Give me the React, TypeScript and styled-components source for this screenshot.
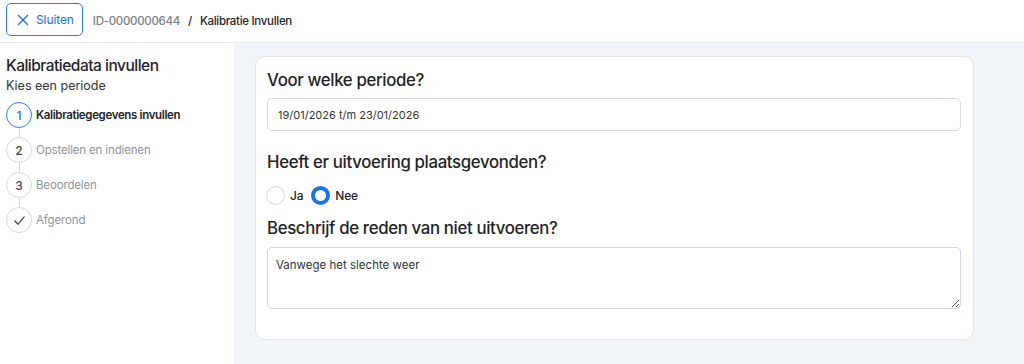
import React from 'react'
import styled, { createGlobalStyle } from 'styled-components'

const GlobalStyle = createGlobalStyle`
body {
    margin: 0;
    font-family: Inter, "Noto Sans", sans-serif;
    color: #1f2328;
    background: #ffffff;
}
* {
    box-sizing: border-box;
}
`

const Page = styled.div`
width : 1024px;
height : 364px;
display : flex;
flex-direction : column;
overflow : hidden;
`
const TopBar = styled.div`
height : 43px;
display : flex;
align-items : center;
padding : 0 6px;
border-bottom : 1px solid #e4e7ec;
gap : 8px;
`
const CloseBtn = styled.button`
height : 33px;
display : flex;
align-items : center;
gap : 7px;
padding : 0 8px 0 10px;
border : 1px solid #2f7de1;
border-radius : 5px;
background : #fff;
color : #1f6fd6;
font-family : inherit;
font-size : 12px;
letter-spacing : -0.1px;
margin-top : -3px;
margin-right : 2px;
`
const Crumb = styled.span<{ dim?: boolean }>`
font-size : 11.5px;
font-weight : 500;
letter-spacing : -0.3px;
color : ${p => p.dim ? '#7b8089' : '#1f2328'};
`
const Body = styled.div`
flex : 1;
display : flex;
`
const Sidebar = styled.div`
width : 234px;
padding : 13px 6px;
background : #fff;
`
const SideTitle = styled.div`
font-size : 15.5px;
font-weight : 500;
line-height : 20px;
letter-spacing : -0.5px;
`
const SideSub = styled.div`
font-size : 12.5px;
color : #333;
margin-top : 2px;
margin-bottom : 9px;
`
const StepList = styled.div`
display : flex;
flex-direction : column;
`
const StepRow = styled.div`
display : flex;
align-items : center;
gap : 4px;
`
const Connector = styled.div`
width : 1px;
height : 9px;
margin-left : 13px;
background : #d4d7dc;
`
const StepDot = styled.div<{ active?: boolean }>`
width : 26px;
height : 26px;
border-radius : 50%;
border : ${p => p.active ? '1.5px solid #2f7de1' : '1px solid #d4d7dc'};
display : flex;
align-items : center;
justify-content : center;
font-size : 12px;
font-weight : 500;
color : ${p => p.active ? '#1f6fd6' : '#444'};
background : #fff;
`
const StepLabel = styled.span<{ active?: boolean }>`
font-size : 11.5px;
font-weight : ${p => p.active ? 600 : 400};
color : ${p => p.active ? '#1f2328' : '#8f949b'};
letter-spacing : ${p => p.active ? '-0.35px' : '-0.15px'};
`
const Main = styled.div`
flex : 1;
background : #f1f4f8;
padding : 13px 50px 0 21px;
`
const Card = styled.div`
background : #fff;
border : 1px solid #e1e4e9;
border-radius : 10px;
padding : 11px 12px 30px 11px;
`
const Question = styled.div`
font-size : 16.8px;
font-weight : 500;
letter-spacing : -0.35px;
line-height : 24px;
margin-bottom : 6px;
`
const TextBox = styled.div`
height : 33px;
border : 1px solid #d5d9e0;
border-radius : 5px;
display : flex;
align-items : center;
padding : 0 10px;
font-size : 11px;
color : #333;
margin-bottom : 19px;
`
const Radios = styled.div`
display : flex;
align-items : center;
gap : 5px;
margin : 12px 0 11px -1px;
`
const Radio = styled.div<{ checked?: boolean }>`
width : 19px;
height : 19px;
border-radius : 50%;
border : ${p => p.checked ? '4.5px solid #1a73e8' : '1px solid #d4d7dc'};
background : #fff;
`
const RadioLabel = styled.span`
font-size : 12px;
font-weight : 500;
letter-spacing : -0.2px;
margin-right : 3px;
`
const Area = styled.textarea`
display : block;
width : 100%;
height : 62px;
margin-top : 7px;
border : 1.5px solid #c9d8ee;
border-radius : 5px;
padding : 10px 8px;
font-family : inherit;
font-size : 11.5px;
color : #333;
resize : vertical;
outline : none;
`

const steps = [
    { n: '1', label: 'Kalibratiegegevens invullen', active: true },
    { n: '2', label: 'Opstellen en indienen' },
    { n: '3', label: 'Beoordelen' },
    { n: 'check', label: 'Afgerond' },
]

function App() {
    return (
        <Page>
            <GlobalStyle />
            <TopBar>
                <CloseBtn>
                    <svg width="12" height="12" viewBox="0 0 12 12" fill="none" stroke="#1f6fd6" strokeWidth="1.4" strokeLinecap="round">
                        <path d="M1.5 1.5 L10.5 10.5 M10.5 1.5 L1.5 10.5" />
                    </svg>
                    Sluiten
                </CloseBtn>
                <Crumb dim>ID-0000000644</Crumb>
                <Crumb>/</Crumb>
                <Crumb>Kalibratie Invullen</Crumb>
            </TopBar>
            <Body>
                <Sidebar>
                    <SideTitle>Kalibratiedata invullen</SideTitle>
                    <SideSub>Kies een periode</SideSub>
                    <StepList>
                        {steps.map((s, i) => (
                            <React.Fragment key={s.label}>
                                {i > 0 && <Connector />}
                                <StepRow>
                                    <StepDot active={s.active}>
                                        {s.n === 'check' ? (
                                            <svg width="13" height="13" viewBox="0 0 14 14" fill="none" stroke="#444" strokeWidth="1.3" strokeLinecap="round" strokeLinejoin="round">
                                                <path d="M2 7.5 L5.5 11 L12 3" />
                                            </svg>
                                        ) : s.n}
                                    </StepDot>
                                    <StepLabel active={s.active}>{s.label}</StepLabel>
                                </StepRow>
                            </React.Fragment>
                        ))}
                    </StepList>
                </Sidebar>
                <Main>
                    <Card>
                        <Question>Voor welke periode?</Question>
                        <TextBox>19/01/2026 t/m 23/01/2026</TextBox>
                        <Question>Heeft er uitvoering plaatsgevonden?</Question>
                        <Radios>
                            <Radio />
                            <RadioLabel>Ja</RadioLabel>
                            <Radio checked />
                            <RadioLabel>Nee</RadioLabel>
                        </Radios>
                        <Question>Beschrijf de reden van niet uitvoeren?</Question>
                        <Area defaultValue="Vanwege het slechte weer" />
                    </Card>
                </Main>
            </Body>
        </Page>
    )
}

export default App
